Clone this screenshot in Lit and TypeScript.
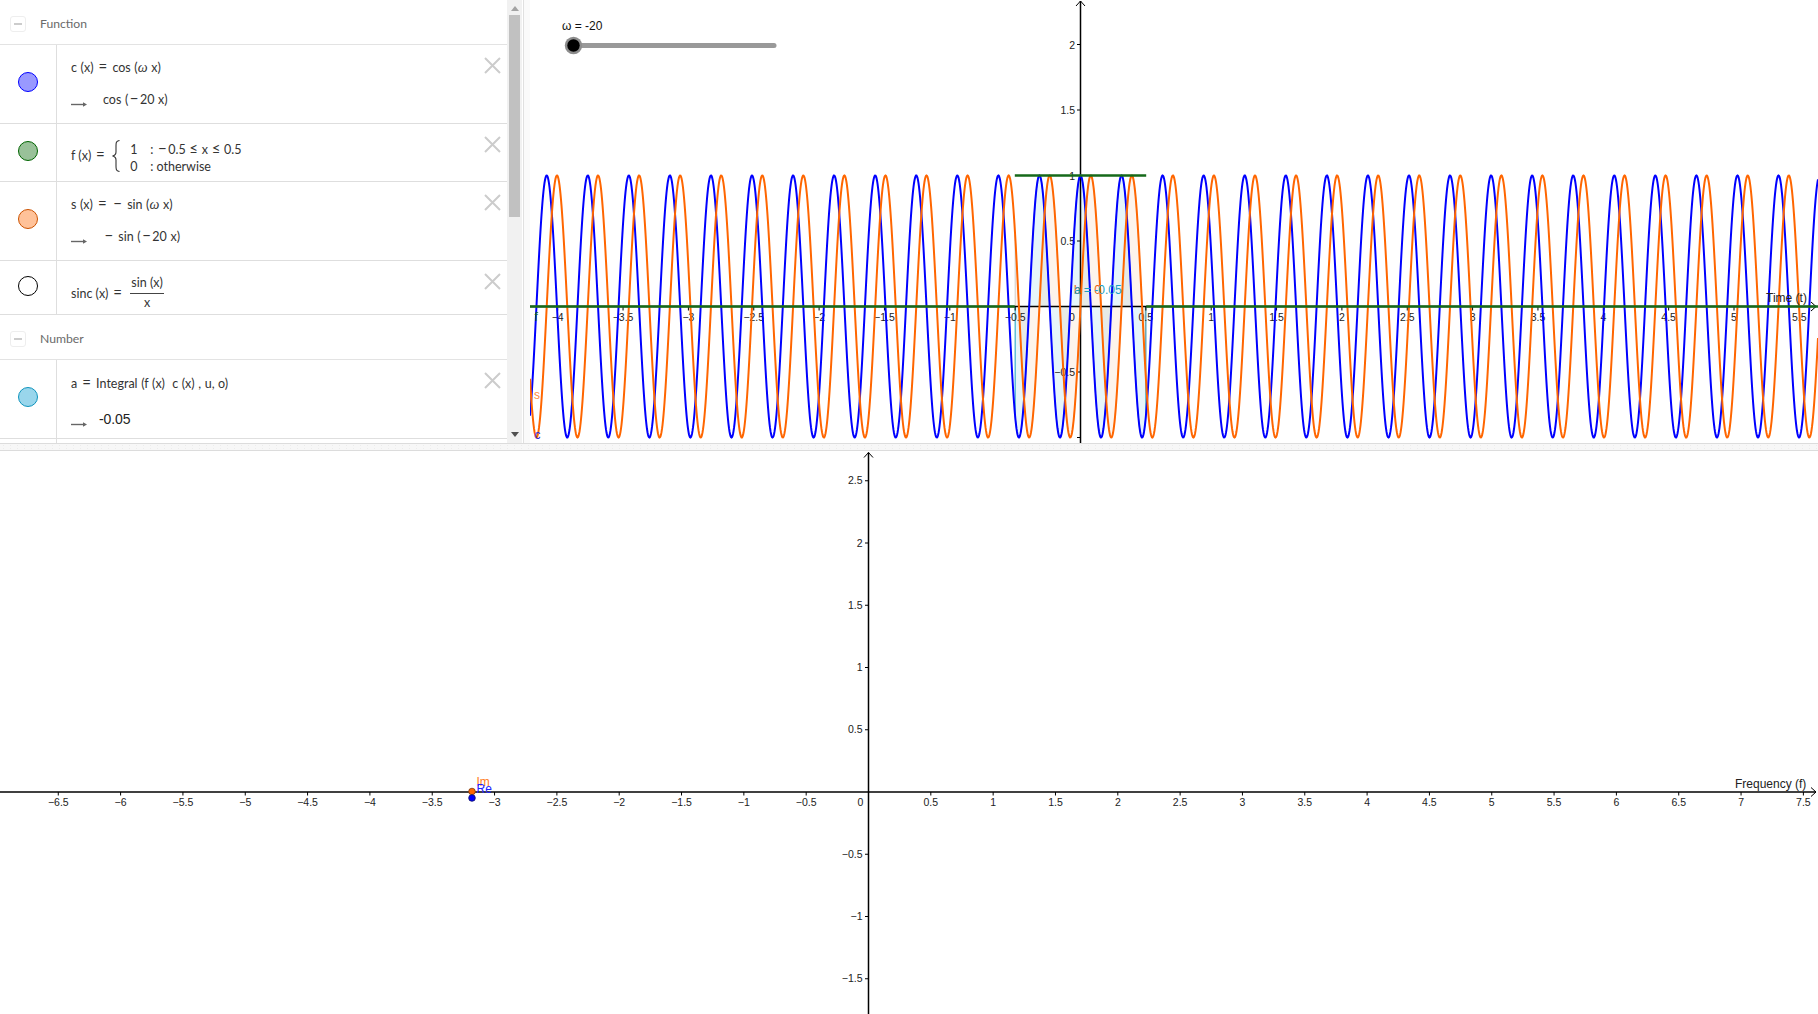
import { LitElement, html, css, svg } from "lit";
import { customElement } from "lit/decorators.js";

const TX0 = 1080.5, TY0 = 306.5, TUX = 130.7, TUY = 131;
const BX0 = 868.5, BY0 = 792, BUX = 124.65, BUY = 124.5;
const W = -20;

const minus = (v: number) => (v < 0 ? "\u2212" + Math.abs(v) : String(v));

function curve(g: (x: number) => number): string {
  const pts: string[] = [];
  for (let px = 530; px <= 1818; px += 0.5) {
    const x = (px - TX0) / TUX;
    pts.push(`${px},${(TY0 - g(x) * TUY).toFixed(2)}`);
  }
  return "M" + pts.join("L");
}

function area(g: (x: number) => number): string {
  const pts: string[] = [`${TX0 - 0.5 * TUX},${TY0}`];
  for (let i = 0; i <= 400; i++) {
    const x = -0.5 + i / 400;
    pts.push(`${(TX0 + x * TUX).toFixed(2)},${(TY0 - g(x) * TUY).toFixed(2)}`);
  }
  pts.push(`${TX0 + 0.5 * TUX},${TY0}`);
  return "M" + pts.join("L") + "Z";
}

const cosW = (x: number) => Math.cos(W * x);
const sinW = (x: number) => -Math.sin(W * x);

function range(a: number, b: number): number[] {
  const out: number[] = [];
  for (let v = a; v <= b + 1e-6; v += 0.5) out.push(Math.round(v * 2) / 2);
  return out;
}

const arrow = html`<svg class="arrow" width="16" height="7" viewBox="0 0 16 7">
  <path d="M0 3.5H14" stroke="#666" stroke-width="1.4" fill="none"></path>
  <path d="M12 1.2L16 3.5L12 5.8Z" fill="#666"></path>
</svg>`;

const closeIcon = html`<svg class="close" width="17" height="17" viewBox="0 0 17 17">
  <path d="M1 1L16 16M16 1L1 16" stroke="#ccc" stroke-width="2" fill="none"></path>
</svg>`;

const eq = html`<span class="op">=</span>`;
const mn = html`<span class="op">−</span>`;
const le = html`<span class="op tight">≤</span>`;

@customElement("algebra-panel")
class AlgebraPanel extends LitElement {
  static styles = css`
    :host {
      display: flex;
      width: 530px;
      height: 443px;
      overflow: hidden;
      font-family: "Lato", "Open Sans", sans-serif;
      color: #333;
      background: #fff;
    }
    .list { width: 507px; flex: none; overflow: hidden; }
    .scroll {
      width: 15px;
      flex: none;
      background: #f1f1f1;
      display: flex;
      flex-direction: column;
      align-items: center;
    }
    .tri-up { margin-top: 6px; width: 0; height: 0; border: 4px solid transparent; border-top: 0; border-bottom: 5px solid #a3a3a3; }
    .thumb { width: 11px; height: 202px; margin-top: 4px; background: #c1c1c1; }
    .tri-down { margin-top: auto; margin-bottom: 6px; width: 0; height: 0; border: 4px solid transparent; border-bottom: 0; border-top: 5px solid #505050; }
    .split { flex: 1; border-left: 1px solid #e0e0e0; margin-left: 1px; background: #fafafa; }
    .head {
      height: 44px;
      border-bottom: 1px solid #e3e3e3;
      display: flex;
      align-items: center;
      padding-left: 10px;
      gap: 14px;
      font-size: 12.2px;
      color: #6a6a6a;
    }
    .head span { margin-top: 2px; }
    .toggle {
      width: 14px;
      height: 14px;
      margin-top: 4px;
      border: 1px solid #eee;
      border-radius: 3px;
      display: flex;
      align-items: center;
      justify-content: center;
    }
    .toggle i { display: block; width: 8px; height: 2px; background: #ccc; }
    .row { display: flex; border-bottom: 1px solid #dedede; box-sizing: border-box; }
    .h79 { height: 79px; }
    .h58 { height: 58px; }
    .h54 { height: 54px; }
    .mcol {
      width: 57px;
      flex: none;
      box-sizing: border-box;
      border-right: 1px solid #dedede;
      display: flex;
      align-items: center;
      justify-content: center;
      padding-bottom: 4px;
    }
    .marble { width: 20px; height: 20px; border-radius: 50%; border: 1px solid; box-sizing: border-box; }
    .math { flex: 1; padding-left: 14px; font-size: 12.5px; }
    .line { height: 32px; line-height: 32px; display: flex; align-items: center; }
    .line span { white-space: pre; word-spacing: 0.4px; }
    .op { font-size: 15px; line-height: 1px; margin: 0 1.5px; }
    .op.tight { margin: 0 0.5px; }
    .pt7 { padding-top: 7px; }
    .pt8 { padding-top: 8px; }
    .arrow { margin: 9px 16px 0 0; flex: none; }
    .line span.val { font-family: "Liberation Sans", sans-serif; font-size: 14px; color: #222; margin-left: -4px; letter-spacing: -0.1px; }
    .tall { height: 39px; line-height: 39px; }
    i.w { font-family: "Liberation Serif", serif; font-size: 14px; }
    .close { flex: none; margin: 12px 6px 0 0; }
    .pw { display: flex; align-items: center; height: 100%; box-sizing: border-box; padding-top: 6px; white-space: pre; }
    .pw svg { margin: 0 10px 0 6px; flex: none; }
    .cases { display: grid; grid-template-columns: 20px auto; grid-auto-rows: 17px; line-height: 17px; margin-top: 4px; }
    .frac { display: flex; align-items: center; height: 100%; box-sizing: border-box; padding-top: 11px; white-space: pre; }
    .frac-in { display: flex; flex-direction: column; align-items: center; margin-left: 7px; line-height: 16px; }
    .frac-in b { font-weight: 400; border-bottom: 1px solid #444; padding: 0 1px 2px; }
    .frac-in span { padding-top: 1px; }
    .stub { height: 4px; width: 57px; box-sizing: border-box; border-right: 1px solid #dedede; }
  `;

  private marble(fill: string, edge: string) {
    return html`<div class="mcol"><div class="marble" style="background:${fill};border-color:${edge}"></div></div>`;
  }

  render() {
    return html`
      <div class="list">
        <div class="head"><div class="toggle"><i></i></div><span>Function</span></div>
        <div class="row h79">
          ${this.marble("#9999ff", "#0000ff")}
          <div class="math pt7">
            <div class="line"><span>c (x) ${eq} cos (<i class="w">ω</i> x)</span></div>
            <div class="line">${arrow}<span>cos (${mn}20 x)</span></div>
          </div>
          ${closeIcon}
        </div>
        <div class="row h58">
          ${this.marble("#99c199", "#006400")}
          <div class="math">
            <div class="pw"><span>f (x) ${eq}</span><svg width="8" height="32" viewBox="0 0 8 32">
                <path d="M7.5 .5C4 1 4 3 4 6V12C4 14 3 15.500 .5 16C3 16.500 4 18 4 20V26C4 29 4 31 7.500 31.500" stroke="#333" stroke-width="1.1" fill="none"></path>
              </svg><div class="cases"><span>1</span><span>: ${mn}0.5 ${le} x ${le} 0.5</span><span>0</span><span>: otherwise</span></div></div>
          </div>
          ${closeIcon}
        </div>
        <div class="row h79">
          ${this.marble("#ffc299", "#cc5200")}
          <div class="math pt7">
            <div class="line"><span>s (x) ${eq} ${mn} sin (<i class="w">ω</i> x)</span></div>
            <div class="line">${arrow}<span>${mn} sin (${mn}20 x)</span></div>
          </div>
          ${closeIcon}
        </div>
        <div class="row h54">
          ${this.marble("#ffffff", "#000000")}
          <div class="math">
            <div class="frac"><span>sinc (x) ${eq}</span><div class="frac-in"><b>sin (x)</b><span>x</span></div></div>
          </div>
          ${closeIcon}
        </div>
        <div class="head"><div class="toggle"><i></i></div><span>Number</span></div>
        <div class="row h79">
          ${this.marble("#99d6ec", "#0f94bd")}
          <div class="math pt8">
            <div class="line"><span>a ${eq} Integral (f (x)  c (x) , u, o)</span></div>
            <div class="line tall">${arrow}<span class="val">-0.05</span></div>
          </div>
          ${closeIcon}
        </div>
        <div class="stub"></div>
      </div>
      <div class="scroll">
        <div class="tri-up"></div>
        <div class="thumb"></div>
        <div class="tri-down"></div>
      </div>
      <div class="split"></div>
    `;
  }
}

@customElement("time-plot")
class TimePlot extends LitElement {
  static styles = css`
    :host { display: block; flex: 1; height: 443px; overflow: hidden; background: #fff; }
    svg { display: block; }
    text { font-family: "Liberation Sans", Arial, sans-serif; }
    .tick { font-size: 10.5px; fill: #222; }
    .lab { font-size: 12px; }
  `;

  render() {
    const xs = range(-4, 5.5);
    const ys = [2, 1.5, 1, 0.5, -0.5, -1];
    return html`<svg width="1288" height="443" viewBox="530 0 1288 443">
      ${svg`
        <path d="${area(cosW)}" fill="#0a9fd0" fill-opacity=".1" stroke="#1a9fc4" stroke-width="1"></path>
        <path d="${area(sinW)}" fill="#e8700a" fill-opacity=".08" stroke="#777" stroke-opacity=".35" stroke-width="1"></path>
        <path d="M1080.500 443V1" stroke="#000" stroke-width="1.500" fill="none"></path>
        <path d="M1076 6L1080.500 1L1085 6" stroke="#000" stroke-width="1" fill="none"></path>
        <path d="M530 306.500H1816" stroke="#000" stroke-width="1.500" fill="none"></path>
        <path d="M1811 302L1816 306.500L1811 311" stroke="#000" stroke-width="1" fill="none"></path>
        ${xs.map((v) => {
          const x = TX0 + v * TUX;
          const lx = v === 0 ? 1072 : x;
          return svg`
            <path d="M${x} 306.500V310.500" stroke="#000" stroke-width="1"></path>
            <text class="tick" x="${lx}" y="321" text-anchor="middle">${minus(v)}</text>`;
        })}
        ${ys.map((v) => {
          const y = TY0 - v * TUY;
          return svg`
            <path d="M1077 ${y}H1080.500" stroke="#000" stroke-width="1"></path>
            ${v === -1 ? null : svg`<text class="tick" x="1075" y="${y + 4}" text-anchor="end">${minus(v)}</text>`}`;
        })}
        <path d="${curve(cosW)}" stroke="#0000ff" stroke-width="2" fill="none"></path>
        <path d="${curve(sinW)}" stroke="#ff6600" stroke-width="2" fill="none"></path>
        <path d="M530 306.500H1014.800M1146.200 306.500H1818M1014.800 175.500H1146.200" stroke="#16691a" stroke-width="2.400" fill="none"></path>
        <text class="lab" x="1074" y="294" fill="#e8620a">b = 0</text>
        <text class="lab" x="1074" y="294" fill="#1a9fc4">a = -0.05</text>
        <text class="lab" x="534.500" y="321" fill="#16691a">f</text>
        <text class="lab" x="534" y="399" fill="#ff8a3c">s</text>
        <text class="lab" x="534.500" y="439" fill="#2f2fe0">c</text>
        <text class="lab" x="1766" y="302" fill="#222">Time (t)</text>
        <text class="lab" x="562" y="30" fill="#111">ω = -20</text>
        <path d="M573 45.500H774" stroke="#999" stroke-width="5" stroke-linecap="round"></path>
        <circle cx="573.500" cy="45.500" r="8.700" fill="#8c8c8c"></circle>
        <circle cx="573.500" cy="45.500" r="6.200" fill="#000"></circle>
      `}
    </svg>`;
  }
}

@customElement("freq-plot")
class FreqPlot extends LitElement {
  static styles = css`
    :host { display: block; height: 563px; overflow: hidden; background: #fff; }
    svg { display: block; }
    text { font-family: "Liberation Sans", Arial, sans-serif; }
    .tick { font-size: 10.5px; fill: #222; }
    .lab { font-size: 12px; }
  `;

  render() {
    const xs = range(-6.5, 7.5);
    const ys = [2.5, 2, 1.5, 1, 0.5, -0.5, -1, -1.5];
    return html`<svg width="1818" height="563" viewBox="0 451 1818 563">
      ${svg`
        <path d="M868.500 1014V452.500" stroke="#000" stroke-width="1.500" fill="none"></path>
        <path d="M864 457.500L868.500 452.500L873 457.500" stroke="#000" stroke-width="1" fill="none"></path>
        <path d="M0 792H1816" stroke="#000" stroke-width="1.500" fill="none"></path>
        <path d="M1811 787.500L1816 792L1811 796.500" stroke="#000" stroke-width="1" fill="none"></path>
        ${xs.map((v) => {
          const x = BX0 + v * BUX;
          const lx = v === 0 ? 860.500 : x;
          return svg`
            <path d="M${x} 792V795.500" stroke="#000" stroke-width="1"></path>
            <text class="tick" x="${lx}" y="806" text-anchor="middle">${minus(v)}</text>`;
        })}
        ${ys.map((v) => {
          const y = BY0 - v * BUY;
          return svg`
            <path d="M865 ${y}H868.500" stroke="#000" stroke-width="1"></path>
            <text class="tick" x="862.500" y="${y + 3.500}" text-anchor="end">${minus(v)}</text>`;
        })}
        <text class="lab" x="1735" y="788" fill="#222">Frequency (f)</text>
        <text class="lab" x="476.500" y="786" fill="#ff7a1a">Im</text>
        <text class="lab" x="476.500" y="793" fill="#2020ff">Re</text>
        <circle cx="472" cy="791.500" r="3.300" fill="#ff6600" stroke="#7a3a10" stroke-width=".8"></circle>
        <circle cx="472" cy="798" r="3.300" fill="#0000ff" stroke="#101060" stroke-width=".8"></circle>
      `}
    </svg>`;
  }
}

@customElement("app-root")
export class AppRoot extends LitElement {
  static styles = css`
    :host { display: block; width: 1818px; height: 1014px; overflow: hidden; background: #fff; }
    .top { display: flex; height: 443px; }
    .bar {
      height: 8px;
      box-sizing: border-box;
      border-top: 1px solid #dcdcdc;
      border-bottom: 1px solid #dcdcdc;
      background-color: #f7f7f7;
      background-image: radial-gradient(#ececec 0.6px, transparent 0.8px);
      background-size: 7px 3px;
    }
  `;

  render() {
    return html`
      <div class="top">
        <algebra-panel></algebra-panel>
        <time-plot></time-plot>
      </div>
      <div class="bar"></div>
      <freq-plot></freq-plot>
    `;
  }
}
